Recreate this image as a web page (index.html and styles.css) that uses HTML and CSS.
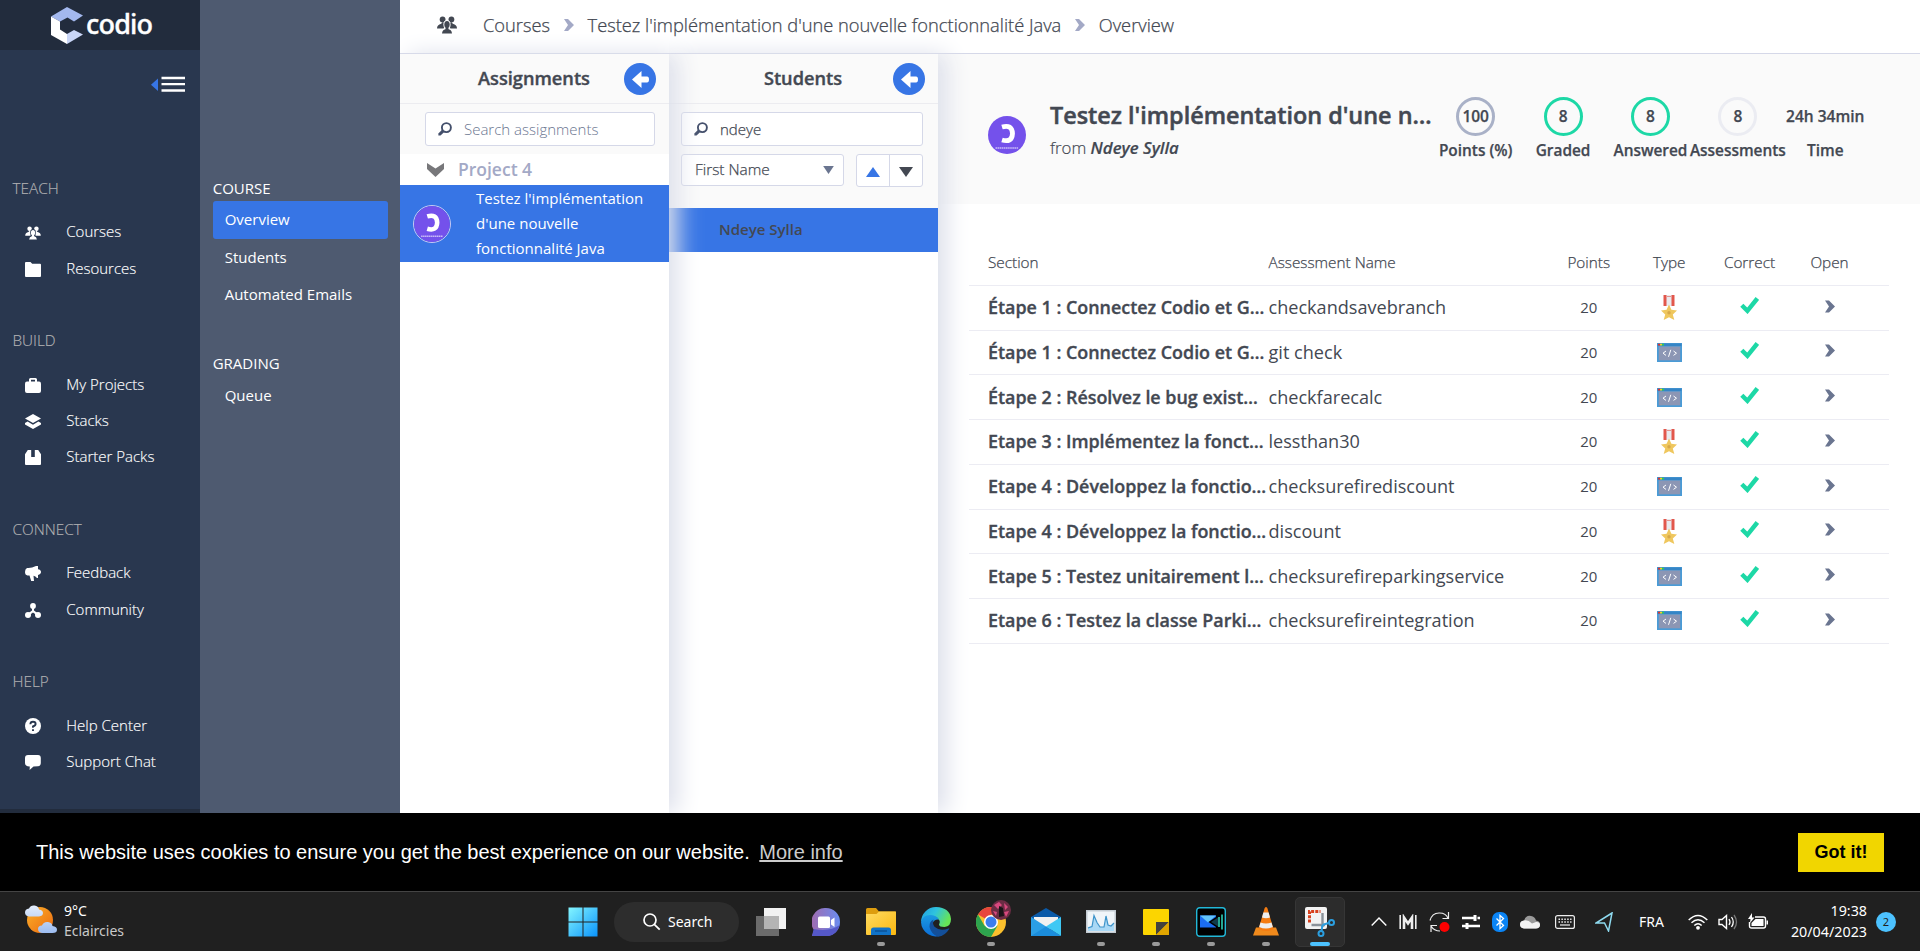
FILE: index.html
```html
<!DOCTYPE html>
<html lang="en">
<head>
<meta charset="utf-8">
<title>Codio</title>
<link rel="stylesheet" href="styles.css">
</head>
<body>
<svg class="defs" width="0" height="0" aria-hidden="true">
  <defs>
    <symbol id="i-group" viewBox="0 0 20 18"><circle cx="5.6" cy="3.4" r="2.9"/><circle cx="14.4" cy="3.4" r="2.9"/><path d="M0 12.500q0-3.800 4.200-4.700L5.600 6l3 1.500-2 5zM20 12.500q0-3.800-4.200-4.700L14.400 6l-3 1.500 2 5z"/><ellipse cx="10" cy="8.600" rx="3.600" ry="4.300" class="cut"/><ellipse cx="10" cy="8.600" rx="2.700" ry="3.500"/><path d="M8.800 11h2.400l.4 2.300q3 .6 3.400 4.200H5q.4-3.600 3.400-4.200z"/></symbol>
    <symbol id="i-folder" viewBox="0 0 16 15"><path d="M1 0h4.500l1.700 1.800H15q1 0 1 1V14q0 1-1 1H1q-1 0-1-1V1q0-1 1-1z"/></symbol>
    <symbol id="i-bag" viewBox="0 0 16 15"><path d="M4 3.500V1.500Q4 0 5.500 0h5Q12 0 12 1.500v2h2q2 0 2 2.300V13q0 2-2 2H2q-2 0-2-2V5.800q0-2.300 2-2.300zm2 0h4V1.800H6z" fill-rule="evenodd"/></symbol>
    <symbol id="i-stack" viewBox="0 0 16 15"><path d="M8 0l8 4.500L8 9 0 4.500zM0 9l2.600-1.400L8 10.800l5.400-3.200L16 9v1.600L8 15l-8-4.400z"/></symbol>
    <symbol id="i-pack" viewBox="0 0 16 15"><path d="M2.800 0h3.400v7h3.600V0h3.400L16 4.200V14q0 1-1 1H1q-1 0-1-1V4.200z"/></symbol>
    <symbol id="i-horn" viewBox="0 0 16 15"><path d="M2 2q4 .6 9-2h2v3.300q3 .4 3 2.700t-3 2.900V12h-1q-1.500-1.800-3.500-2.300L9 15H6.200L4.500 9.500H2.500Q0 9 0 6t2-4z"/></symbol>
    <symbol id="i-nodes" viewBox="0 0 16 15"><circle cx="8" cy="2.900" r="2.900"/><circle cx="3" cy="12" r="3"/><circle cx="13" cy="12" r="3"/><path d="M7 4h2v3.600l4 3-1.200 1.600L8 9.500l-3.800 2.700L3 10.600l4-3z"/></symbol>
    <symbol id="i-help" viewBox="0 0 16 16"><circle cx="8" cy="8" r="8"/><path d="M5.400 6.200Q5.400 3.800 8 3.800t2.600 2.300Q10.600 7.600 8 8.500v1.300M8 11.200v1.900" class="cutline"/></symbol>
    <symbol id="i-chat" viewBox="0 0 16 15"><path d="M3 0h10q2.800 0 2.800 3v5q0 3-2.800 3.200L8.500 11.500 4.600 15l.2-3.600Q0 11.500 0 8V3q0-3 3-3z"/></symbol>
    <symbol id="i-chev" viewBox="0 0 10 12"><path d="M0 0h4l6 6-6 6H0l4-6z"/></symbol>
    <symbol id="i-search" viewBox="0 0 14 14"><circle cx="8.400" cy="5.600" r="4.500" fill="none" stroke="currentColor" stroke-width="1.900"/><path d="M4 7.800L6.300 10 2.500 13.500H.4v-2z"/></symbol>
    <symbol id="i-back" viewBox="0 0 32 32"><circle cx="16" cy="16" r="16" fill="#3775e5"/><path d="M8 16.500L17.500 8v5.500h5.500q2 0 2 3t-2 3h-5.500V25z" fill="#fff"/></symbol>
    <symbol id="i-tick" viewBox="0 0 19 17"><path d="M1.800 8.200l5.600 5.600L17.300 1.500" fill="none" stroke="#1dd8a6" stroke-width="4.400"/></symbol>
    <symbol id="i-oc" viewBox="0 0 38 38"><circle cx="19" cy="19" r="19" fill="#7451eb"/><path d="M14 11q10-3 10.500 6.500-.5 9.500-10.500 6.500" fill="none" stroke="#fff" stroke-width="4.800"/><path d="M7.500 32h23" stroke="#c9bbf8" stroke-width="1.600" stroke-dasharray="1.600 .5"/></symbol>
    <symbol id="i-medal" viewBox="0 0 16 25"><path d="M2.500 0h11v11h-11z" fill="#e2574c"/><path d="M5.500 0h5v11h-5z" fill="#e9eaee"/><path d="M6 1.500h4" stroke="#e2574c" stroke-width=".6"/><path d="M8 9.500l2.400 5.200 5.600.8-4.200 3.900 1.500 5.600L8 22.200 2.700 25l1.500-5.600L0 15.500l5.600-.8z" fill="#efc75e"/><circle cx="8" cy="17.800" r="1.700" fill="#d7a94a"/></symbol>
    <symbol id="i-code" viewBox="0 0 25 19"><path d="M0 0h25v19H0z" fill="#4a9bd6"/><path d="M.5.500h24v2.600H.5z" fill="#3585c6"/><path d="M1 .8h2v1.700H1z" fill="#e2342c"/><path d="M3 .8h2v1.700H3z" fill="#f4d31f"/><path d="M5 .8h2v1.700H5z" fill="#2fce57"/><path d="M1.800 3.500h21.400v13.800H1.800z" fill="#8c96b4"/><path d="M9 8l-3 2.200L9 12.400M16.500 8l3 2.200-3 2.200M13.800 6.800l-2.300 7" fill="none" stroke="#fff" stroke-width="1"/></symbol>
    <linearGradient id="g-win" x1="0" y1="0" x2="1" y2="1"><stop offset="0" stop-color="#84f6ff"/><stop offset="1" stop-color="#0a93fb"/></linearGradient>
    <linearGradient id="g-chat" x1="0" y1="0" x2="1" y2="0"><stop offset="0" stop-color="#a06cb0"/><stop offset="1" stop-color="#6a8cf0"/></linearGradient>
    <linearGradient id="g-fold" x1="0" y1="0" x2="1" y2="1"><stop offset="0" stop-color="#ffdb62"/><stop offset="1" stop-color="#fbb810"/></linearGradient>
    <linearGradient id="g-edge" x1="0" y1="0" x2="1" y2=".4"><stop offset="0" stop-color="#1f9be0"/><stop offset=".5" stop-color="#2fc3df"/><stop offset="1" stop-color="#66e457"/></linearGradient>
    <linearGradient id="g-edge2" x1="0" y1="0" x2="0" y2="1"><stop offset="0" stop-color="#1c9be2"/><stop offset="1" stop-color="#0b6dd6"/></linearGradient>
    <linearGradient id="g-sun" x1="0" y1="0" x2="1" y2="1"><stop offset="0" stop-color="#fbb02a"/><stop offset="1" stop-color="#ec6a10"/></linearGradient>
    <linearGradient id="g-cloud" x1="0" y1="0" x2="0" y2="1"><stop offset="0" stop-color="#e4edfb"/><stop offset="1" stop-color="#9cbcf0"/></linearGradient>
  </defs>
</svg>

<div class="app">
  <aside class="nav">
    <div class="brand">
      <svg width="32" height="37" viewBox="0 0 32 37"><path d="M0 9.500L16 0l16 8.500-9 6-6.500-4L9 14.500z" fill="#a3b8ee"/><path d="M0 9.500l9 5v8l7 4.500v10L0 28z" fill="#fff"/><path d="M16 27l7-4 9 4.500L16 37z" fill="#cad6f7"/></svg>
      <span class="brand-name">codio</span>
    </div>
    <div class="collapse">
      <svg width="34" height="17" viewBox="0 0 34 17"><path d="M0 8.800L7 2.500V15z" fill="#3775e5"/><path d="M10.500 2H34M10.500 8.200H34M10.500 14.500H34" stroke="#fff" stroke-width="2.300"/></svg>
    </div>
    <div class="nav-groups">
      <section class="nav-group"><h2>TEACH</h2>
        <a><svg width="16" height="14"><use href="#i-group"/></svg>Courses</a>
        <a><svg width="16" height="15"><use href="#i-folder"/></svg>Resources</a></section>
      <section class="nav-group"><h2>BUILD</h2>
        <a><svg width="16" height="15"><use href="#i-bag"/></svg>My Projects</a>
        <a><svg width="16" height="15"><use href="#i-stack"/></svg>Stacks</a>
        <a><svg width="16" height="15"><use href="#i-pack"/></svg>Starter Packs</a></section>
      <section class="nav-group"><h2>CONNECT</h2>
        <a><svg width="16" height="15"><use href="#i-horn"/></svg>Feedback</a>
        <a><svg width="16" height="15"><use href="#i-nodes"/></svg>Community</a></section>
      <section class="nav-group"><h2>HELP</h2>
        <a><svg width="16" height="16"><use href="#i-help"/></svg>Help Center</a>
        <a><svg width="16" height="15"><use href="#i-chat"/></svg>Support Chat</a></section>
    </div>
    <div class="nav-foot"></div>
  </aside>

  <aside class="subnav">
    <h2>COURSE</h2>
    <a class="current">Overview</a>
    <a>Students</a>
    <a>Automated Emails</a>
    <h2 class="second">GRADING</h2>
    <a>Queue</a>
  </aside>

  <main class="main">
    <header class="crumbs">
      <svg class="crumb-icon" width="20" height="18"><use href="#i-group"/></svg>
      <span>Courses</span>
      <svg class="sep" width="10" height="12"><use href="#i-chev"/></svg>
      <span>Testez l'implémentation d'une nouvelle fonctionnalité Java</span>
      <svg class="sep" width="10" height="12"><use href="#i-chev"/></svg>
      <span>Overview</span>
    </header>
    <div class="columns">
      <section class="panel assignments">
        <div class="panel-head"><h3>Assignments</h3><svg width="32" height="32"><use href="#i-back"/></svg></div>
        <div class="filters">
          <div class="field muted"><svg width="14" height="14"><use href="#i-search"/></svg><span>Search assignments</span></div>
        </div>
        <div class="module"><svg width="17" height="14" viewBox="0 0 17 14"><path d="M0 0l8.500 5.500L17 0v6l-8.500 8L0 6z" fill="#77777a"/></svg><span>Project 4</span></div>
        <div class="assignment"><svg class="ring" width="38" height="38"><use href="#i-oc"/></svg><p>Testez l'implémentation<br>d'une nouvelle<br>fonctionnalité Java</p></div>
      </section>

      <section class="panel students">
        <div class="panel-head"><h3>Students</h3><svg width="32" height="32"><use href="#i-back"/></svg></div>
        <div class="filters">
          <div class="field"><svg width="14" height="14"><use href="#i-search"/></svg><span>ndeye</span></div>
          <div class="sort">
            <div class="select"><span>First Name</span><svg width="11" height="8" viewBox="0 0 12 9"><path d="M0 0h12L6 9z" fill="#6a7590"/></svg></div>
            <div class="dirs">
              <span><svg width="14" height="10" viewBox="0 0 14 10"><path d="M7 0l7 10H0z" fill="#3775e5"/></svg></span>
              <span><svg width="14" height="10" viewBox="0 0 14 10"><path d="M0 0h14L7 10z" fill="#434852"/></svg></span>
            </div>
          </div>
        </div>
        <div class="student">Ndeye Sylla</div>
      </section>

      <section class="detail">
        <div class="detail-head">
          <svg class="avatar" width="38" height="38"><use href="#i-oc"/></svg>
          <div class="who"><h1>Testez l'implémentation d'une n…</h1><p>from <em>Ndeye Sylla</em></p></div>
          <div class="stats">
            <div class="stat"><b class="ring-grey">100</b><span>Points (%)</span></div>
            <div class="stat"><b class="ring-green">8</b><span>Graded</span></div>
            <div class="stat"><b class="ring-green">8</b><span>Answered</span></div>
            <div class="stat"><b class="ring-pale">8</b><span>Assessments</span></div>
            <div class="stat"><b>24h 34min</b><span>Time</span></div>
          </div>
        </div>
        <div class="table">
          <div class="row head"><span>Section</span><span>Assessment Name</span><span>Points</span><span>Type</span><span>Correct</span><span>Open</span></div>
          <div class="row"><strong>Étape 1 : Connectez Codio et G…</strong><span class="name">checkandsavebranch</span><span>20</span><svg width="16" height="25"><use href="#i-medal"/></svg><svg class="tick" width="19" height="17"><use href="#i-tick"/></svg><svg class="open" width="10" height="13"><use href="#i-chev"/></svg></div>
          <div class="row"><strong>Étape 1 : Connectez Codio et G…</strong><span class="name">git check</span><span>20</span><svg width="25" height="19"><use href="#i-code"/></svg><svg class="tick" width="19" height="17"><use href="#i-tick"/></svg><svg class="open" width="10" height="13"><use href="#i-chev"/></svg></div>
          <div class="row"><strong>Étape 2 : Résolvez le bug exist…</strong><span class="name">checkfarecalc</span><span>20</span><svg width="25" height="19"><use href="#i-code"/></svg><svg class="tick" width="19" height="17"><use href="#i-tick"/></svg><svg class="open" width="10" height="13"><use href="#i-chev"/></svg></div>
          <div class="row"><strong>Etape 3 : Implémentez la fonct…</strong><span class="name">lessthan30</span><span>20</span><svg width="16" height="25"><use href="#i-medal"/></svg><svg class="tick" width="19" height="17"><use href="#i-tick"/></svg><svg class="open" width="10" height="13"><use href="#i-chev"/></svg></div>
          <div class="row"><strong>Etape 4 : Développez la fonctio…</strong><span class="name">checksurefirediscount</span><span>20</span><svg width="25" height="19"><use href="#i-code"/></svg><svg class="tick" width="19" height="17"><use href="#i-tick"/></svg><svg class="open" width="10" height="13"><use href="#i-chev"/></svg></div>
          <div class="row"><strong>Etape 4 : Développez la fonctio…</strong><span class="name">discount</span><span>20</span><svg width="16" height="25"><use href="#i-medal"/></svg><svg class="tick" width="19" height="17"><use href="#i-tick"/></svg><svg class="open" width="10" height="13"><use href="#i-chev"/></svg></div>
          <div class="row"><strong>Etape 5 : Testez unitairement l…</strong><span class="name">checksurefireparkingservice</span><span>20</span><svg width="25" height="19"><use href="#i-code"/></svg><svg class="tick" width="19" height="17"><use href="#i-tick"/></svg><svg class="open" width="10" height="13"><use href="#i-chev"/></svg></div>
          <div class="row"><strong>Etape 6 : Testez la classe Parki…</strong><span class="name">checksurefireintegration</span><span>20</span><svg width="25" height="19"><use href="#i-code"/></svg><svg class="tick" width="19" height="17"><use href="#i-tick"/></svg><svg class="open" width="10" height="13"><use href="#i-chev"/></svg></div>
        </div>
      </section>
    </div>
  </main>
</div>

<div class="cookies"><p>This website uses cookies to ensure you get the best experience on our website. <a>More info</a></p><button>Got it!</button></div>

<footer class="taskbar">
  <div class="weather">
    <svg width="32" height="31" viewBox="0 0 32 31"><circle cx="15" cy="15" r="13" fill="url(#g-sun)"/><path d="M4 11.500q-4-.5-4-4t4-4Q5.500 0 9.500.5q4 .5 4.500 4 4 .5 4 3.500t-4 3.500zM17 28q-4-.5-4-4t4-3.500q1.500-4 6-3.500 4 .5 4.500 4 4.500.5 4.500 3.700T27.500 28z" fill="url(#g-cloud)"/></svg>
    <p>9°C<br><span>Eclaircies</span></p>
  </div>
  <div class="dock">
    <div class="app-icon"><svg width="30" height="30" viewBox="0 0 30 30"><path d="M.5.500h14v14H.5zM15.500.500h14v14h-14zM.5 15.500h14v14H.5zM15.500 15.500h14v14h-14z" fill="url(#g-win)"/></svg></div>
    <div class="search"><svg width="18" height="18" viewBox="0 0 18 18"><circle cx="7" cy="7" r="6" fill="none" stroke="#fff" stroke-width="1.700"/><path d="M11.300 11.300l5.400 5.400" stroke="#fff" stroke-width="1.800"/></svg>Search</div>
    <div class="app-icon"><svg width="30" height="28" viewBox="0 0 30 28"><path d="M8 0h22v21H8z" fill="#f2f2f2"/><path d="M0 8h23v20H0z" fill="#6b6b6b"/><path d="M8 8h15v13H8z" fill="#b4b4b4"/></svg></div>
    <div class="app-icon"><svg width="28" height="28" viewBox="0 0 28 28"><path d="M14 0a14 14 0 1 1 0 28H0l2-6A14 14 0 0 1 14 0z" fill="url(#g-chat)"/><path d="M1.700 21a14 14 0 0 0 26-4Q18 24 1.700 21L0 28h14" fill="#5558c8"/><rect x="6" y="8.500" width="12" height="11.500" rx="1.500" fill="#fff"/><path d="M19 12l3.500-2.500v9.500L19 16.500z" fill="#fff"/></svg></div>
    <div class="app-icon on"><svg width="30" height="27" viewBox="0 0 30 27"><path d="M0 1.500Q0 0 1.500 0H10l3 3.500H30V8H0z" fill="#dd9d0e"/><path d="M0 6h10.500L13 3.500h16q1 0 1 1V26q0 1-1 1H1q-1 0-1-1z" fill="url(#g-fold)"/><path d="M5 27v-5q0-2.500 2.500-2.500h15Q25 19.500 25 22v5z" fill="#1173c8"/><path d="M9 23h12" stroke="#0b4a8c" stroke-width="1.200"/></svg></div>
    <div class="app-icon"><svg width="30" height="30" viewBox="0 0 30 30"><path d="M0 15a15 15 0 0 1 15-15q14 .5 15 12 0 7.500-6.500 8-5.500 0-5.500-2.500 1.500-3 0-4.500Q15.500 8.500 9 9.500 2.500 10.500 0 15z" fill="url(#g-edge)"/><path d="M0 15Q2 7.500 10 8q6 .5 8 4.500-5-.5-6.500 4-.5 5 3 8.500 3.500 2.500 7 3A15 15 0 0 1 0 15z" fill="url(#g-edge2)"/><path d="M12.500 12.500q-4.500 2-4 7.500 1.500 7 8.500 9.800 7-.8 11.200-7.800.3-1-.7-.6-8.500 3.400-14-1.600-2.500-3.500-1-7.300z" fill="#134f99"/></svg></div>
    <div class="app-icon on"><svg width="30" height="30" viewBox="0 0 30 30"><circle cx="15" cy="15" r="15" fill="#fbc02d"/><path d="M15 15L2 7.500A15 15 0 0 1 28 7.500H15z" fill="#e8453c"/><path d="M15 15L8.500 18.800 2 7.500A15 15 0 0 0 15 30l6.500-11.200z" fill="#2da44e"/><circle cx="15" cy="15" r="7" fill="#fff"/><circle cx="15" cy="15" r="5.500" fill="#3b7ded"/></svg>
      <svg class="profile" width="20" height="20" viewBox="0 0 20 20"><circle cx="10" cy="10" r="10" fill="#6b2c44"/><path d="M3 5l5-3 3 3-4 4zM13 3l4 4-3 3zM2 11l4 1-1 4zM13 12l5-1-3 6z" fill="#d8487e"/><path d="M8 6l4 2 1 8-5 1z" fill="#1a1418"/></svg></div>
    <div class="app-icon"><svg width="30" height="28" viewBox="0 0 30 28"><path d="M0 9L15 0l15 9v9H0z" fill="#0a5aa8"/><path d="M3 9h24v9L15 22 3 17z" fill="#f1f1f1"/><path d="M0 9l30 19H0z" fill="#2b9fe6"/><path d="M30 9L15 18.500 30 28z" fill="#3fc8f4"/><path d="M0 28l15-9.500L30 28z" fill="#1b8ddc"/></svg></div>
    <div class="app-icon on"><svg width="30" height="23" viewBox="0 0 30 23"><path d="M0 0h30v23H0z" fill="#c3cbd2"/><path d="M1.500 1.500h27v20h-27z" fill="#f0f5f9"/><path d="M2 17l4-1 2-10 3 7 3 4 4 0 2-10 2 8 3 1 3-3v8H2z" fill="#a9d8f5"/><path d="M2 18l4-1.500L8 5.500l3 7 3 4.500h4l2-11 2 9 3 1 3-3" fill="none" stroke="#3d93c9" stroke-width="1.200"/></svg></div>
    <div class="app-icon on"><svg width="26" height="26" viewBox="0 0 26 26"><rect width="26" height="26" rx="1" fill="#fcd500"/><path d="M13 13h13L13 26z" fill="#44423d"/><path d="M26 13v13H13z" fill="#e0a500"/></svg></div>
    <div class="app-icon on"><svg width="30" height="30" viewBox="0 0 30 30"><rect x=".7" y=".7" width="28.600" height="28.600" rx="3" fill="#000" stroke="#22b8d8" stroke-width="1.400"/><path d="M4 8.500h16v12H4z" fill="#1b6df2"/><path d="M4 8.500h16L12 15.500z" fill="#62c4fa"/><path d="M23 8v14L12.500 15z" fill="#000"/><path d="M22 10.500v9L15 15z" fill="#103a4a"/><path d="M23 10v10M26 7.500v15" stroke="#2fd0b6" stroke-width="1.600"/></svg></div>
    <div class="app-icon on"><svg width="26" height="29" viewBox="0 0 26 29"><path d="M3 20.500h20l3 8H0z" fill="#f08a1c"/><path d="M13 0q1.200 0 1.500 1.500L20.500 22q-7 4-15 0L11.500 1.500Q11.800 0 13 0z" fill="#f57c12"/><path d="M10.400 5.500h5.200l1.400 5Q13 12 9 10.500zM7.500 15.500q5.500 2 11 0l1.300 4.500q-6.800 3-13.600 0z" fill="#eee"/></svg></div>
    <div class="app-icon active"><svg width="30" height="30" viewBox="0 0 30 30"><rect width="22" height="22" rx="2" fill="#f3f3f3"/><path d="M4.500 15.500v-11h11" fill="none" stroke="#d8401c" stroke-width="3" stroke-dasharray="3 1.200"/><path d="M17.500 6v14M6.500 18H20" stroke="#8b9299" stroke-width="2.400" fill="none"/><path d="M17.500 18l6-2M17.500 18l-1 6" stroke="#2b9fe0" stroke-width="2"/><circle cx="26.500" cy="15.500" r="2.500" fill="none" stroke="#2b9fe0" stroke-width="2"/><circle cx="16" cy="26.500" r="2.500" fill="none" stroke="#2b9fe0" stroke-width="2"/></svg></div>
  </div>
  <div class="tray">
    <svg width="16" height="11" viewBox="0 0 16 11"><path d="M.7 9.500L8 2l7.300 7.500" fill="none" stroke="#fff" stroke-width="1.400"/></svg>
    <svg width="18" height="16" viewBox="0 0 18 16"><path d="M1.200 1v14M16.800 1v14" stroke="#eee" stroke-width="1.600"/><path d="M5 15V3.500l4 6 4-6V15" fill="none" stroke="#eee" stroke-width="2.600"/></svg>
    <svg width="21" height="20" viewBox="0 0 21 20"><path d="M1 8.500Q3 1.200 10 1t9 5.500M19.500 0v6.500h-6M2 20v-6.500h6M2 14Q5 19 11 19" fill="none" stroke="#eee" stroke-width="1.200"/><circle cx="15.500" cy="15" r="5" fill="#f00"/></svg>
    <svg width="18" height="16" viewBox="0 0 18 16"><path d="M0 4h14M15.500 4H18M0 12h4M5 12h13" stroke="#fff" stroke-width="2.400"/><path d="M13 1v6M5 9v6" stroke="#fff" stroke-width="3"/></svg>
    <svg width="16" height="20" viewBox="0 0 16 20"><rect width="16" height="20" rx="7" fill="#0a84f5"/><path d="M4.500 6.500l7 7L8 16.500v-13l3.500 3-7 7" fill="none" stroke="#fff" stroke-width="1.300"/></svg>
    <svg width="20" height="14" viewBox="0 0 20 14"><path d="M4 13.500Q0 13 0 9.500T4 5.500Q6 0 11 1q4 .8 5 4.500 4 .5 4 4t-4 4z" fill="#9a9a9a"/><path d="M4 13.500Q0 13 0 9.500T4 5.500q4-1 8 3l4-1.500q4-.3 4 3t-4 3.500z" fill="#f2f2f2"/></svg>
    <svg class="kbd" width="20" height="14" viewBox="0 0 20 14"><rect x=".6" y=".6" width="18.800" height="12.800" rx="2" fill="none" stroke="#eee" stroke-width="1.200"/><path d="M3.500 4.200h13M3.500 7h13" stroke="#eee" stroke-width="1.500" stroke-dasharray="1.500 1.400"/><path d="M5 10h10" stroke="#eee" stroke-width="1.200"/></svg>
    <svg class="loc" width="18" height="20" viewBox="0 0 18 20"><path d="M17 1L1 11h8.500l4 8z" fill="none" stroke="#8edbf0" stroke-width="1.500"/></svg>
    <span class="lang">FRA</span>
    <svg class="wifi" width="20" height="16" viewBox="0 0 20 16"><path d="M.7 6q9.300-9 18.600 0M3.500 8.800q6.500-6 13 0M6.300 11.500q3.700-3.500 7.400 0" fill="none" stroke="#fff" stroke-width="1.500"/><circle cx="10" cy="13.800" r="1.900" fill="#fff"/></svg>
    <svg class="tight" width="20" height="16" viewBox="0 0 20 16"><path d="M1 5.500h3L8.500 1.500v13L4 10.500H1z" fill="none" stroke="#fff" stroke-width="1.400"/><path d="M11 5q2 3 0 6M13.500 3q3.500 5 0 10" fill="none" stroke="#fff" stroke-width="1.300"/><path d="M16 1q5 7 0 14" fill="none" stroke="#777" stroke-width="1.300"/></svg>
    <svg class="tight" width="20" height="17" viewBox="0 0 20 17"><path d="M7 4h8.500q2 0 2 2v7q0 2-2 2h-12q-2 0-2-2V9" fill="none" stroke="#fff" stroke-width="1.400"/><path d="M7.500 6h8v7H3.500v-3zM18.500 7.500h1.500v4h-1.500zM4 0L0 6h2.500L2 10l4.500-5.500H4z" fill="#fff"/></svg>
    <p>19:38<br>20/04/2023</p>
    <b>2</b>
  </div>
</footer>
</body>
</html>
```
FILE: styles.css
```css
* { box-sizing: border-box; }
body { margin: 0; width: 1920px; height: 951px; overflow: hidden; display: flex; flex-direction: column; font-family: "Open Sans", "Noto Sans", sans-serif; color: #434852; background: #fff; }
h1, h2, h3, p { margin: 0; font-weight: inherit; font-size: inherit; }
svg { display: block; flex: none; fill: currentColor; }
.defs { position: absolute; }
.cut { fill: var(--cut, #fff); }
.cutline { fill: none; stroke: #29374f; stroke-width: 1.9; }

.app { display: flex; height: 813px; overflow: hidden; }

/* primary navigation */
.nav { --cut: #29374f; width: 200px; background: #29374f; color: #fff; display: flex; flex-direction: column; font-size: 15px; font-weight: 300; -webkit-text-stroke: .15px; }
.brand { height: 50px; background: #222c3d; display: flex; align-items: center; padding: 0 0 0 51px; }
.brand-name { font-family: "Noto Sans", sans-serif; font-size: 27px; font-weight: 500; line-height: 36px; margin: -3px 0 0 3px; letter-spacing: -.8px; -webkit-text-stroke: .4px; }
.collapse { height: 112.650px; padding: 26px 15px 0 0; display: flex; justify-content: flex-end; align-items: flex-start; }
.nav-group { margin-bottom: 29px; }
.nav h2 { height: 50.700px; line-height: 50.700px; padding-left: 12.500px; color: #b0b0b2; font-size: 15.300px; }
.nav a { height: 36.300px; display: flex; align-items: center; padding-left: 25px; gap: 25.300px; }
.nav a svg { margin-top: 3px; }
.nav-groups { flex: 1; }
.nav-foot { height: 4px; background: #222c3d; }

/* course navigation */
.subnav { width: 200px; background: #4e5a70; color: #fff; padding: 176px 12px 0 12.700px; font-size: 15px; }
.subnav h2 { height: 25px; line-height: 25px; }
.subnav a { display: block; height: 37.700px; line-height: 37.700px; padding-left: 12px; border-radius: 3px; }
.subnav .current { background: #3775e5; }
.subnav .second { margin-top: 37px; height: 26px; }

/* breadcrumbs */
.main { width: 1520px; display: flex; flex-direction: column; }
.crumbs { height: 54px; border-bottom: 1px solid #d5d8e8; display: flex; align-items: center; padding: 0 0 4px 37px; font-size: 18.300px; font-weight: 300; -webkit-text-stroke: .25px; }
.crumb-icon { margin-right: 26px; }
.crumbs .sep { color: #a3a9c6; margin: 0 14px 0 13.500px; }

.columns { flex: 1; display: flex; min-height: 0; }
.panel { width: 269px; background: #fff; position: relative; box-shadow: 9px 0 22px #dde0eb; clip-path: inset(-20px -40px 0 0); }
.assignments { z-index: 3; }
.students { z-index: 2; }
.panel-head { height: 50px; background: #fafafa; border-bottom: 1px solid #ececf0; display: flex; align-items: center; justify-content: flex-end; padding-right: 13px; }
.panel-head h3 { flex: 1; text-align: center; font-size: 18.200px; font-weight: 600; padding: 0 0 1px 44px; -webkit-text-stroke: .4px; }
.filters { background: #fafafa; padding: 8px 14px 8px 25px; }
.students .filters { padding: 8px 15px 0 12px; height: 104px; }
.field { height: 34px; border: 1px solid #d5d8e8; border-radius: 3px; background: #fff; display: flex; align-items: center; font-size: 15px; font-weight: 300; padding-left: 12px; gap: 12px; -webkit-text-stroke: .25px; }
.field span, .select span, .module span { padding-bottom: 1px; }
.field svg { color: #434f6b; }
.muted { color: #6a7590; -webkit-text-stroke: 0; }
.module { height: 31px; display: flex; align-items: center; padding-left: 27px; gap: 14px; font-size: 17.500px; font-weight: 600; color: #a3a9c6; }
.assignment { height: 77px; background: #3775e5; color: #fff; display: flex; align-items: center; padding: 0 0 0 13px; gap: 25px; font-size: 15px; line-height: 25px; white-space: nowrap; }
.assignment p { padding-bottom: 1px; }
.ring { border: 1px solid #c6c8f4; border-radius: 50%; }
.sort { display: flex; justify-content: space-between; padding-top: 8px; }
.select { width: 163px; height: 32px; border: 1px solid #d5d8e8; border-radius: 3px; background: #fff; display: flex; align-items: center; justify-content: space-between; padding: 0 9px 0 13px; font-size: 15.400px; font-weight: 300; -webkit-text-stroke: .25px; }
.dirs { width: 67px; height: 33px; border: 1px solid #d5d8e8; border-radius: 3px; background: #fff; display: flex; }
.dirs span { flex: 1; display: flex; align-items: center; justify-content: center; padding-top: 3px; }
.dirs span + span { border-left: 1px solid #d5d8e8; }
.student { height: 44px; line-height: 43px; background: #3775e5; padding-left: 50px; font-size: 15px; font-weight: 600; }

/* student detail */
.detail { width: 982px; }
.detail-head { height: 150px; background: #fafafa; display: flex; padding-left: 50px; }
.avatar { margin-top: 62px; }
.who { width: 382px; margin: 43px 0 0 24px; white-space: nowrap; }
.who h1 { font-size: 23.400px; font-weight: 600; line-height: 36px; -webkit-text-stroke: .5px; }
.who p { font-size: 16.800px; font-weight: 300; line-height: 30px; -webkit-text-stroke: .2px; }
.who em { font-weight: 600; }
.stats { display: flex; padding-top: 43px; }
.stat { width: 87.400px; display: flex; flex-direction: column; align-items: center; font-size: 15.500px; font-weight: 600; white-space: nowrap; -webkit-text-stroke: .25px; }
.stat b { height: 39px; min-width: 39px; border-radius: 20px; display: flex; align-items: center; justify-content: center; font-weight: 600; padding-bottom: 1px; }
.stat span { line-height: 20px; margin-top: 5px; font-size: 15.400px; }
.ring-grey { border: 3px solid #a9b1c7; }
.ring-green { border: 3px solid #1dd8a6; }
.ring-pale { border: 3px solid #ebecf2; }
.table { margin: 37px 31px 0; }
.row { height: 44.750px; display: grid; grid-template-columns: 280.500px 280px 80.500px 80.500px 80px 80px; align-items: center; padding-left: 19px; border-bottom: 1px solid #ececf3; font-size: 17.900px; white-space: nowrap; justify-items: center; }
.row > :first-child, .row > :nth-child(2) { justify-self: start; }
.row > span { font-size: 15px; padding-bottom: 1px; }
.row > .name { font-size: 18.100px; }
.row strong { font-weight: 600; padding-bottom: 1px; -webkit-text-stroke: .35px; }
.head { font-weight: 300; -webkit-text-stroke: .25px; }
.head > span { font-size: 15.300px; }
.tick { margin-top: -4px; }
.open { color: #6a7590; margin-top: -3px; }

/* cookie notice */
.cookies { height: 78px; background: #000; color: #fff; display: flex; align-items: center; justify-content: space-between; padding: 0 36px; font-family: "Liberation Sans", Arial, sans-serif; font-size: 20px; }
.cookies a { color: #ccc; text-decoration: underline; margin-left: 4px; }
.cookies button { width: 86px; height: 39px; border: 0; background: #f1d600; color: #000; font: bold 18px "Liberation Sans", Arial, sans-serif; padding: 0; }

/* desktop taskbar */
.taskbar { height: 60px; background: #202020; border-top: 1px solid #444; color: #fff; display: flex; font-family: "Noto Sans", sans-serif; font-size: 14px; }
.weather { width: 555px; display: flex; padding: 13px 0 0 25px; gap: 7px; line-height: 20px; }
.weather p { margin-top: -4px; }
.weather span { color: #c9c9c9; }
.dock { width: 791px; display: flex; align-items: center; }
.app-icon { width: 55px; height: 50px; display: flex; align-items: center; justify-content: center; position: relative; }
.search { width: 125px; height: 40px; margin: 0 4px; border-radius: 20px; background: #2d2d2d; display: flex; align-items: center; padding-left: 29px; gap: 7px; }
.on::after, .active::after { content: ""; position: absolute; bottom: 1px; left: 50%; width: 8px; height: 4px; margin-left: -4px; border-radius: 2px; background: #9a9a9a; }
.active { width: 50px; margin-left: 2px; background: #2c2c2c; border: 1px solid #363636; border-radius: 5px; }
.active::after { width: 20px; margin-left: -10px; bottom: 0; background: #4cc2ff; }
.profile { position: absolute; left: 28px; top: 3px; }
.tray { flex: 1; display: flex; align-items: center; padding: 0 24px 0 25px; gap: 12px; }
.kbd { margin-left: 3px; }
.loc { margin-left: 8px; }
.lang { margin-left: 14px; }
.wifi { margin-left: 12px; }
.tight { margin-left: -2px; }
.tray p { text-align: right; line-height: 20.500px; margin-left: auto; margin-right: -3px; font-size: 14.300px; }
.tray b { width: 20px; height: 20px; border-radius: 50%; background: #4cc2ff; color: #202020; font-size: 11px; font-weight: 400; display: flex; align-items: center; justify-content: center; }
```
